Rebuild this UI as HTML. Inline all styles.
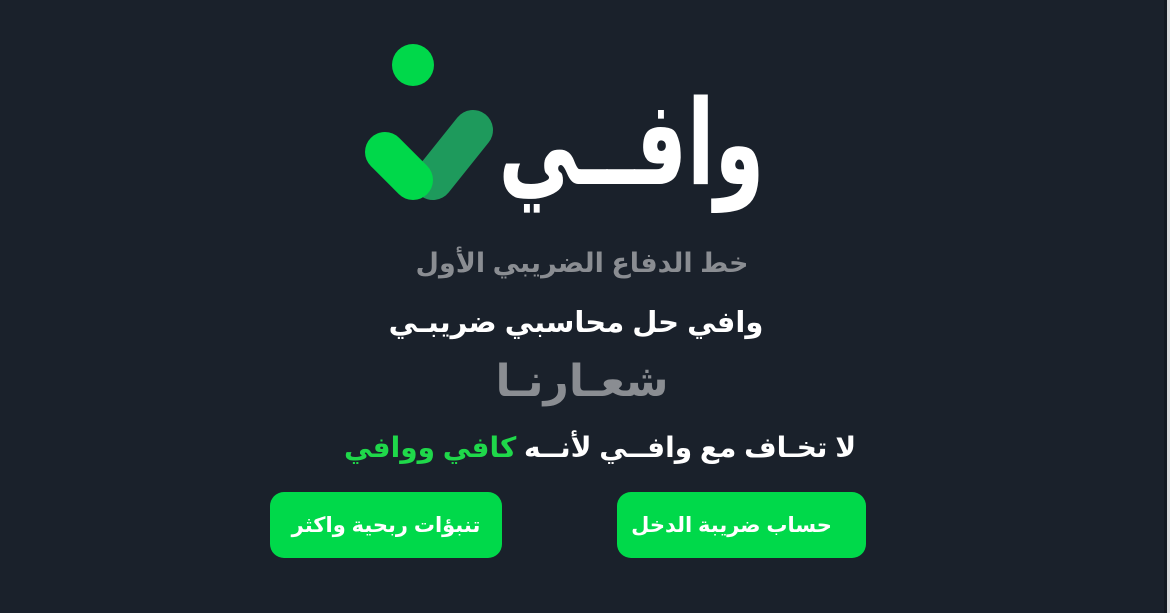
<!DOCTYPE html>
<html><head><meta charset="utf-8"><style>
body{margin:0;width:1170px;height:613px;background:#1a212b;overflow:hidden;position:relative;font-family:"Liberation Sans","DejaVu Sans",sans-serif;font-weight:bold}
.t{position:absolute;left:0;width:1164px;text-align:center;white-space:nowrap;direction:rtl}
.btn{position:absolute;background:#00d94a;border-radius:14px;color:#fff;font-size:21px;display:flex;align-items:center;justify-content:center;direction:rtl}
</style></head><body>
<div style="position:absolute;right:3px;top:0;width:3px;height:613px;background:#141a22"></div>
<div style="position:absolute;right:0;top:0;width:3px;height:613px;background:#d8dadc"></div>
<svg style="position:absolute;left:355px;top:40px" width="150" height="170" viewBox="0 0 150 170">
<circle cx="58" cy="25" r="21" fill="#00d84a"/>
<line x1="78" y1="140" x2="118" y2="90" stroke="#1e9a5c" stroke-width="40" stroke-linecap="round"/>
<line x1="30" y1="112" x2="58" y2="140" stroke="#00d84a" stroke-width="40" stroke-linecap="round"/>
</svg>
<div class="t" style="top:74px;left:462px;width:360px;font-size:118px;color:#fff;text-align:center;transform:scaleX(0.68);transform-origin:center">وافــي</div>
<div class="t" style="top:248px;font-size:27px;color:#8a8d92">خط الدفاع الضريبي الأول</div>
<div class="t" style="top:305px;font-size:29px;color:#fff;left:-6px">وافي حل محاسبي ضريبـي</div>
<div class="t" style="top:356px;font-size:44px;color:#8a8d92">شعـارنـا</div>
<div class="t" style="top:431px;font-size:28px;color:#fff;left:18px">لا تخـاف مع وافــي لأنــه <span style="color:#1fd84a">كافي ووافي</span></div>
<div class="btn" style="left:270px;top:492px;width:232px;height:66px">تنبؤات ربحية واكثر</div>
<div class="btn" style="left:617px;top:492px;width:249px;height:66px;box-sizing:border-box;padding-right:20px">حساب ضريبة الدخل</div>
</body></html>
